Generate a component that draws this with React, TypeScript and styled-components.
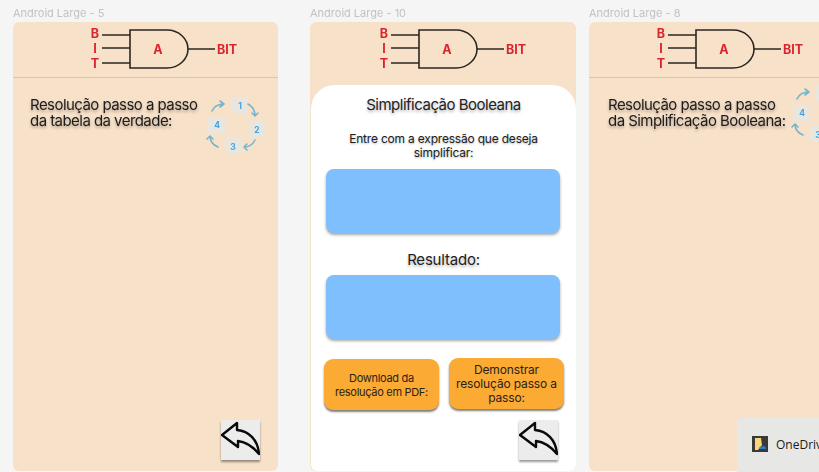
import * as React from 'react';
import styled, { createGlobalStyle } from 'styled-components';

const GlobalStyle = createGlobalStyle`
  html, body {
    margin: 0;
    height: 472px;
    overflow: hidden;
    background: #f5f5f5;
    font-family: Inter, "Liberation Sans", sans-serif;
  }
`;

const Canvas = styled.div`
  position: relative;
  display: flex;
  align-items: flex-start;
  width: 819px;
  height: 472px;
  overflow: hidden;
  padding-left: 13px;
  box-sizing: border-box;
  background: #f5f5f5;
`;

const Column = styled.div<{ $width: number; $gap: number }>`
  flex: 0 0 ${(p) => p.$width}px;
  margin-right: ${(p) => p.$gap}px;
  filter: blur(0.45px);
`;

const FrameLabel = styled.div`
  height: 22px;
  padding-top: 6px;
  box-sizing: border-box;
  font-size: 11px;
  line-height: 14px;
  color: #c2c2c2;
`;

const Frame = styled.div`
  display: flex;
  flex-direction: column;
  height: 449px;
  border-radius: 6px;
  background: #f8e1c9;
  overflow: hidden;
`;

const Header = styled.div<{ $line?: boolean }>`
  flex: 0 0 56px;
  box-sizing: border-box;
  border-bottom: 1px solid ${(p) => (p.$line ? '#f7b9a2' : 'transparent')};
`;

const Logo = styled.svg<{ $shift: number }>`
  display: block;
  width: 160px;
  height: 54px;
  margin-left: ${(p) => p.$shift}px;
`;

const LogoText = styled.text`
  font-family: Inter, "Liberation Sans", sans-serif;
  font-size: 12.5px;
  font-weight: 700;
  fill: #d9262e;
  text-anchor: middle;
  dominant-baseline: central;
`;

const Intro = styled.div<{ $left: number }>`
  display: flex;
  align-items: flex-start;
  padding: 19px 0 0 ${(p) => p.$left}px;
`;

const IntroText = styled.p`
  flex: 0 0 auto;
  margin: 0;
  font-size: 15px;
  line-height: 16px;
  letter-spacing: -0.55px;
  color: #1c1c1c;
  text-shadow: 0 2px 3px rgba(0, 0, 0, 0.3);
`;

const Cycle = styled.svg<{ $left: number; $top: number }>`
  flex: 0 0 60px;
  width: 60px;
  height: 60px;
  margin-left: ${(p) => p.$left}px;
  margin-top: ${(p) => p.$top}px;
`;

const CycleText = styled.text`
  font-family: Inter, "Liberation Sans", sans-serif;
  font-size: 8.5px;
  font-weight: 700;
  fill: #45a3de;
  text-anchor: middle;
  dominant-baseline: central;
`;

const Sheet = styled.div`
  flex: 1;
  display: flex;
  flex-direction: column;
  margin: 7px 0 0 1px;
  padding-top: 11px;
  background: #fff;
  border-radius: 24px 24px 6px 6px;
`;

const SheetTitle = styled.h2`
  margin: 0;
  font-size: 15px;
  font-weight: 400;
  line-height: 18px;
  letter-spacing: -0.5px;
  text-align: center;
  color: #222;
  text-shadow: 0 2px 3px rgba(0, 0, 0, 0.3);
`;

const Prompt = styled.p`
  margin: 18px 30px 9px;
  font-size: 12px;
  line-height: 14px;
  letter-spacing: -0.2px;
  text-align: center;
  color: #222;
  text-shadow: 0 1px 2px rgba(0, 0, 0, 0.3);
`;

const ResultTitle = styled(SheetTitle)`
  margin: 18px 0 6px;
  letter-spacing: -0.2px;
`;

const Field = styled.div`
  height: 64px;
  margin: 0 16px 0 15px;
  border-radius: 8px;
  background: #80bffd;
  box-shadow: 0 2px 3px rgba(0, 0, 0, 0.35);
`;

const Actions = styled.div`
  display: flex;
  align-items: flex-start;
  gap: 10px;
  margin-top: 19px;
  padding-left: 13px;
`;

const ActionButton = styled.button<{ $drop?: boolean; $size: number; $track: number }>`
  flex: 0 0 115px;
  height: 51px;
  margin-top: ${(p) => (p.$drop ? 1 : 0)}px;
  padding: 0 2px;
  border: 0;
  border-radius: 9px;
  background: #fbaa33;
  box-shadow: 0 2px 2px rgba(0, 0, 0, 0.5);
  font-family: inherit;
  font-size: ${(p) => p.$size}px;
  line-height: 14px;
  letter-spacing: ${(p) => p.$track}px;
  color: #2a2218;
`;

const BackButton = styled.div`
  align-self: flex-end;
  width: 39px;
  height: 40px;
  margin: auto 18px 11px 0;
  background: #ececec;
  box-shadow: 0 2px 2px rgba(0, 0, 0, 0.4);
`;

const BackIcon = styled.svg`
  display: block;
  width: 39px;
  height: 40px;
`;

const Toast = styled.div`
  position: absolute;
  left: 737px;
  top: 418px;
  display: flex;
  align-items: center;
  gap: 8px;
  width: 120px;
  height: 54px;
  padding: 0 0 2px 15px;
  box-sizing: border-box;
  background: #e7e7e5;
  font-family: "Open Sans", "Liberation Sans", sans-serif;
  font-size: 12px;
  color: #1a1a1a;
  white-space: nowrap;
`;

const ToastIcon = styled.svg`
  flex: 0 0 16px;
  width: 16px;
  height: 16px;
`;

const GateLogo = ({ shift }: { shift: number }) => (
  <Logo $shift={shift} viewBox="0 0 160 54">
    <g fill="none" stroke="#2b2620" strokeWidth="1.4">
      <path d="M17 13 H45 M17 26 H45 M17 41 H45" />
      <path d="M45 8 H82 C94 8 103 17 103 27 C103 37 94 46 82 46 H45 Z" strokeWidth="1.6" />
      <path d="M103 27 H130" />
    </g>
    <LogoText x="10" y="11">B</LogoText>
    <LogoText x="10" y="26">I</LogoText>
    <LogoText x="10" y="41">T</LogoText>
    <LogoText x="73" y="27">A</LogoText>
    <LogoText x="142" y="27">BIT</LogoText>
  </Logo>
);

const CycleIcon = ({ left, top }: { left: number; top: number }) => (
  <Cycle $left={left} $top={top} viewBox="0 0 60 60">
    <g fill="#e9e6e0">
      <rect x="26" y="2" width="17" height="16" rx="2" />
      <rect x="44" y="26" width="16" height="17" rx="2" />
      <rect x="20" y="43" width="17" height="16" rx="2" />
      <rect x="3" y="22" width="17" height="16" rx="2" />
    </g>
    <g fill="none" stroke="#74b4cf" strokeWidth="1.6" strokeLinecap="round" strokeLinejoin="round">
      <path d="M7 16 C9 11 13 9 19 9 M15 6 L19 9 L15 12" />
      <path d="M43 9 C47 11 50 15 50 21 M47 18 L50 21 L53 18" />
      <path d="M50 45 C48 49 44 52 39 52 M42 49 L39 52 L42 55" />
      <path d="M13 52 C8 50 5 46 5 41 M2 44 L5 41 L8 44" />
    </g>
    <CycleText x="35" y="11">1</CycleText>
    <CycleText x="52" y="35">2</CycleText>
    <CycleText x="28" y="52">3</CycleText>
    <CycleText x="12" y="30">4</CycleText>
  </Cycle>
);

const Back = () => (
  <BackButton>
    <BackIcon viewBox="0 0 39 40">
      <path
        d="M1 15 L16 3 V10 C28 11 37 20 38 34 C33 28 26 22 17 21 V27 Z"
        fill="none"
        stroke="#0a0a0a"
        strokeWidth="2.4"
        strokeLinejoin="round"
      />
    </BackIcon>
  </BackButton>
);

const App = (): JSX.Element => (
  <Canvas>
    <GlobalStyle />
    <Column $width={265} $gap={32}>
      <FrameLabel>Android Large - 5</FrameLabel>
      <Frame>
        <Header $line>
          <GateLogo shift={72} />
        </Header>
        <Intro $left={17}>
          <IntroText>
            Resolução passo a passo
            <br />
            da tabela da verdade:
          </IntroText>
          <CycleIcon left={8} top={-2} />
        </Intro>
        <Back />
      </Frame>
    </Column>
    <Column $width={266} $gap={13}>
      <FrameLabel>Android Large - 10</FrameLabel>
      <Frame>
        <Header>
          <GateLogo shift={64} />
        </Header>
        <Sheet>
          <SheetTitle>Simplificação Booleana</SheetTitle>
          <Prompt>Entre com a expressão que deseja simplificar:</Prompt>
          <Field />
          <ResultTitle>Resultado:</ResultTitle>
          <Field />
          <Actions>
            <ActionButton $drop $size={11} $track={-0.3}>
              Download da resolução em PDF:
            </ActionButton>
            <ActionButton $size={12} $track={-0.15}>
              Demonstrar resolução passo a passo:
            </ActionButton>
          </Actions>
          <Back />
        </Sheet>
      </Frame>
    </Column>
    <Column $width={266} $gap={0}>
      <FrameLabel>Android Large - 8</FrameLabel>
      <Frame>
        <Header $line>
          <GateLogo shift={62} />
        </Header>
        <Intro $left={19}>
          <IntroText>
            Resolução passo a passo
            <br />
            da Simplificação Booleana:
          </IntroText>
          <CycleIcon left={5} top={-14} />
        </Intro>
        <Back />
      </Frame>
    </Column>
    <Toast>
      <ToastIcon viewBox="0 0 16 16">
        <rect width="16" height="16" fill="#3b3a38" />
        <path d="M3 2 H9 L10 9 L6 14 H3 Z" fill="#f7d774" />
        <path d="M7 13 C7 11 9 10 10.5 10.5 C12 9.5 14 10.5 14 13 Z" fill="#2a7fd0" />
      </ToastIcon>
      OneDrive
    </Toast>
  </Canvas>
);

export default App;
